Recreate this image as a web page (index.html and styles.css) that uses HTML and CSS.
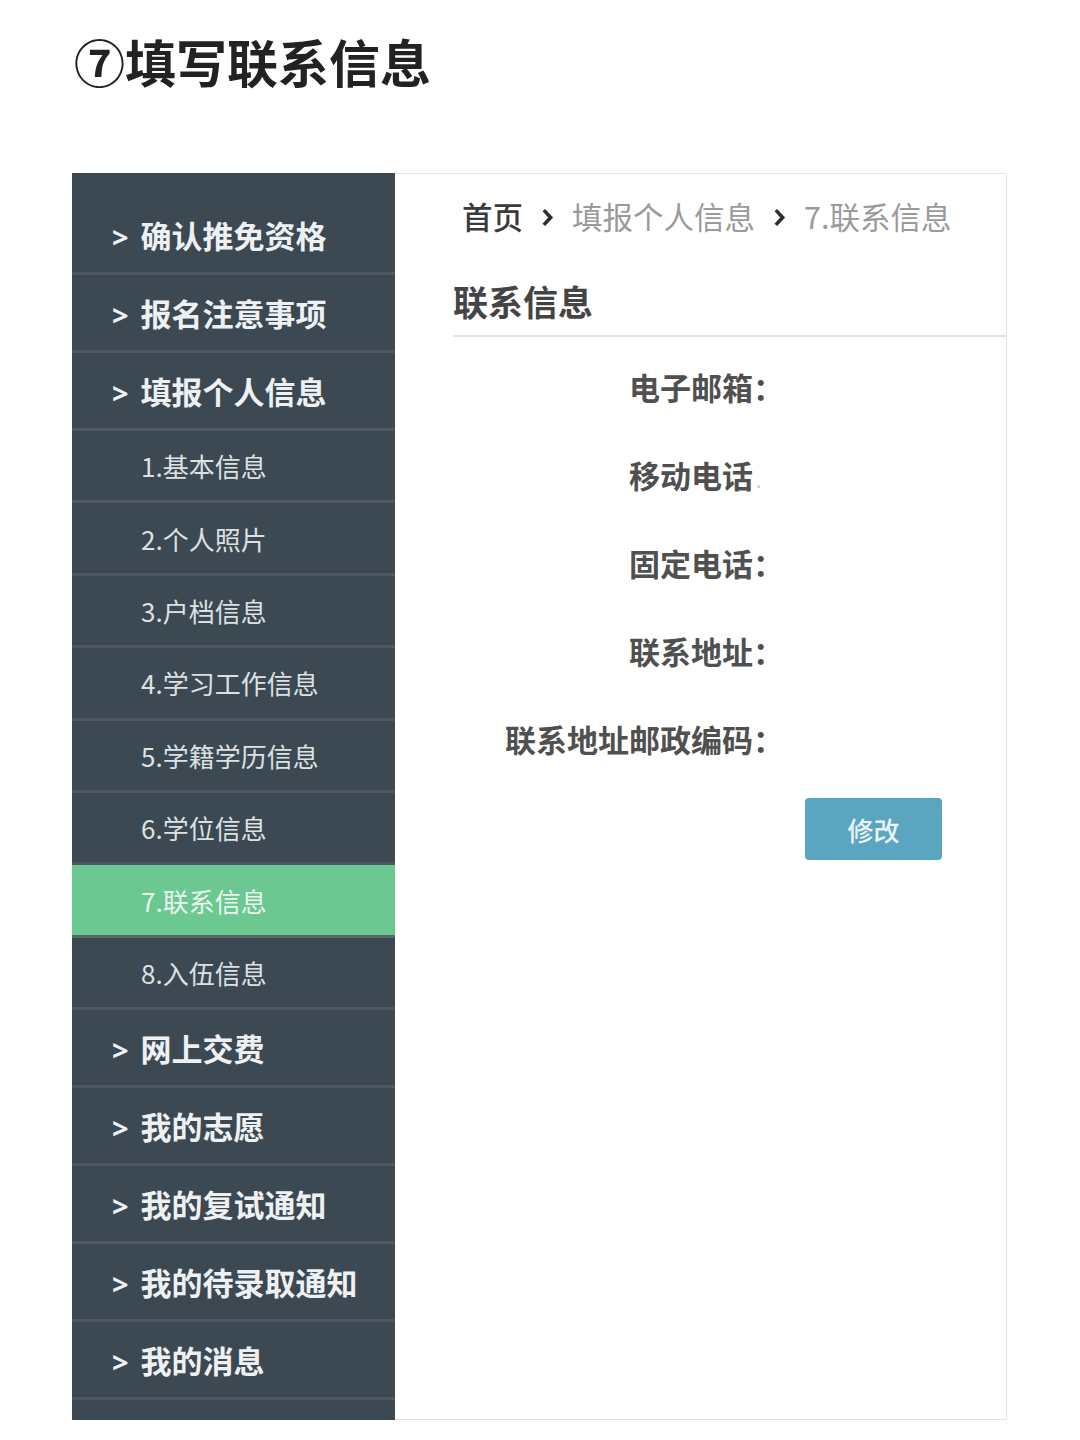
FILE: index.html
```html
<!DOCTYPE html>
<html lang="zh-CN">
<head>
<meta charset="utf-8">
<title>填写联系信息</title>
<link rel="stylesheet" href="styles.css">
</head>
<body>
<h1 class="title">⑦填写联系信息</h1>
<div class="panel">
  <nav class="sidebar">
    <div class="item top first"><span class="arrow">&gt;</span>确认推免资格</div>
    <div class="item top"><span class="arrow">&gt;</span>报名注意事项</div>
    <div class="item top"><span class="arrow">&gt;</span>填报个人信息</div>
    <div class="item sub">1.基本信息</div>
    <div class="item sub">2.个人照片</div>
    <div class="item sub">3.户档信息</div>
    <div class="item sub">4.学习工作信息</div>
    <div class="item sub">5.学籍学历信息</div>
    <div class="item sub">6.学位信息</div>
    <div class="item sub active">7.联系信息</div>
    <div class="item sub">8.入伍信息</div>
    <div class="item top"><span class="arrow">&gt;</span>网上交费</div>
    <div class="item top"><span class="arrow">&gt;</span>我的志愿</div>
    <div class="item top"><span class="arrow">&gt;</span>我的复试通知</div>
    <div class="item top"><span class="arrow">&gt;</span>我的待录取通知</div>
    <div class="item top"><span class="arrow">&gt;</span>我的消息</div>
  </nav>
  <main class="content">
    <div class="breadcrumb">
      <span class="crumb home">首页</span>
      <svg class="chev" viewBox="0 0 12 18" width="13" height="19"><path d="M2.5 2 L9 9 L2.5 16" fill="none" stroke="#2e2e2e" stroke-width="3.4"/></svg>
      <span class="crumb">填报个人信息</span>
      <svg class="chev" viewBox="0 0 12 18" width="13" height="19"><path d="M2.5 2 L9 9 L2.5 16" fill="none" stroke="#2e2e2e" stroke-width="3.4"/></svg>
      <span class="crumb">7.联系信息</span>
    </div>
    <h2 class="section-title">联系信息</h2>
    <div class="form">
      <div class="label">电子邮箱：</div><div class="field"></div>
      <div class="label">移动电话<span class="faint">.</span></div><div class="field"></div>
      <div class="label">固定电话：</div><div class="field"></div>
      <div class="label">联系地址：</div><div class="field"></div>
      <div class="label">联系地址邮政编码：</div><div class="field"></div>
      <div class="spacer"></div><div class="actions"><button class="btn">修改</button></div>
    </div>
  </main>
</div>
</body>
</html>
```
FILE: styles.css
```css
html, body {
  margin: 0;
  padding: 0;
  background: #ffffff;
}
body {
  font-family: "Noto Sans CJK SC", "Noto Sans", sans-serif;
  width: 1080px;
  height: 1440px;
  overflow: hidden;
}
.title {
  margin: 0;
  padding: 30px 0 0 74px;
  height: 173px;
  box-sizing: border-box;
  font-size: 51px;
  line-height: 62px;
  font-weight: 700;
  color: #222222;
}
.panel {
  margin-left: 72px;
  width: 935px;
  height: 1247px;
  display: flex;
}
.sidebar {
  width: 323px;
  flex: none;
  background: #3c4852;
  padding-top: 24px;
  box-sizing: border-box;
  overflow: hidden;
}
.item {
  display: flex;
  align-items: center;
  box-sizing: border-box;
  border-bottom: 3px solid #4d5862;
  color: #eef1f3;
}
.item.top {
  height: 78px;
  padding-left: 40px;
  font-size: 31px;
  font-weight: 700;
}
.arrow {
  font-family: "Noto Sans", sans-serif;
  font-weight: 700;
  font-size: 29px;
  margin-right: 12px;
  margin-top: 3px;
}
.item.sub {
  height: 72.4px;
  padding-left: 69px;
  font-size: 26px;
  font-weight: 400;
  color: #dce1e4;
}
.item.active {
  background: #6cc891;
  border-bottom-color: #5a6a6a;
  color: #e9f6ee;
}
.content {
  flex: 1;
  border: 1px solid #e4e4e4;
  border-left: none;
  padding: 22px 0 0 58px;
  box-sizing: border-box;
  display: flex;
  flex-direction: column;
}
.breadcrumb {
  display: flex;
  align-items: center;
  gap: 16px;
  margin-left: 9px;
  height: 40px;
  font-size: 30.5px;
  color: #9a9a9a;
}
.crumb.home {
  color: #3a3a3a;
  font-weight: 500;
}
.chev {
  margin: 2px 2px 0;
}
.section-title {
  margin: 41px 0 0;
  height: 48px;
  line-height: 48px;
  font-size: 35px;
  font-weight: 700;
  color: #444444;
  padding-bottom: 10px;
  border-bottom: 2px solid #e2e2e2;
}
.form {
  display: grid;
  grid-template-columns: 331px 1fr;
  grid-auto-rows: 88px;
  margin-top: 6px;
}
.label {
  text-align: right;
  font-size: 31px;
  font-weight: 700;
  color: #505050;
  line-height: 88px;
  white-space: nowrap;
}
.faint {
  display: inline-block;
  width: 31px;
  text-align: left;
  color: #c0c0c0;
  font-weight: 400;
  font-size: 18px;
  padding-left: 3px;
  box-sizing: border-box;
}
.actions {
  padding: 15px 0 0 21px;
}
.btn {
  width: 137px;
  height: 62px;
  border: none;
  border-radius: 4px;
  background: #5aa6c1;
  color: #eaf4f8;
  font-family: "Noto Sans CJK SC", sans-serif;
  font-size: 26px;
  font-weight: 500;
  padding: 0;
}
```
